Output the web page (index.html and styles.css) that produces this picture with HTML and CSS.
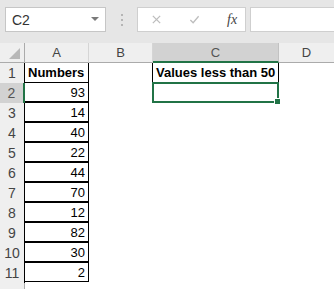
FILE: index.html
```html
<!DOCTYPE html>
<html lang="en">
<head>
  <meta charset="UTF-8">
  <title>Sheet</title>
  <link rel="stylesheet" href="styles.css">
</head>
<body>
  <div class="toolbar">
    <div class="name-box">
      <span class="name-text">C2</span>
      <span class="name-arrow"></span>
    </div>
    <div class="grip"><i></i><i></i><i></i></div>
    <div class="fx-box">
      <svg class="fx-icon" viewBox="0 0 12 12"><path d="M2 2l8 8M10 2l-8 8"/></svg>
      <svg class="fx-icon" viewBox="0 0 12 12"><path d="M1.5 6.5l3 3 6-7"/></svg>
      <span class="fx-label">fx</span>
    </div>
    <div class="formula-input"></div>
  </div>

  <div class="sheet">
    <div class="corner"><span class="corner-tri"></span></div>
    <div class="col-head">A</div>
    <div class="col-head">B</div>
    <div class="col-head active">C</div>
    <div class="col-head last">D</div>

    <div class="row-head">1</div>
    <div class="cell boxed top bold">Numbers</div>
    <div class="cell"></div>
    <div class="cell boxed-c bold">Values less than 50</div>
    <div class="cell"></div>

    <div class="row-head active">2</div>
    <div class="cell boxed num">93</div>
    <div class="cell"></div>
    <div class="cell selected"><span class="fill-handle"></span></div>
    <div class="cell"></div>

    <div class="row-head">3</div>
    <div class="cell boxed num">14</div>
    <div class="cell"></div><div class="cell"></div><div class="cell"></div>

    <div class="row-head">4</div>
    <div class="cell boxed num">40</div>
    <div class="cell"></div><div class="cell"></div><div class="cell"></div>

    <div class="row-head">5</div>
    <div class="cell boxed num">22</div>
    <div class="cell"></div><div class="cell"></div><div class="cell"></div>

    <div class="row-head">6</div>
    <div class="cell boxed num">44</div>
    <div class="cell"></div><div class="cell"></div><div class="cell"></div>

    <div class="row-head">7</div>
    <div class="cell boxed num">70</div>
    <div class="cell"></div><div class="cell"></div><div class="cell"></div>

    <div class="row-head">8</div>
    <div class="cell boxed num">12</div>
    <div class="cell"></div><div class="cell"></div><div class="cell"></div>

    <div class="row-head">9</div>
    <div class="cell boxed num">82</div>
    <div class="cell"></div><div class="cell"></div><div class="cell"></div>

    <div class="row-head">10</div>
    <div class="cell boxed num">30</div>
    <div class="cell"></div><div class="cell"></div><div class="cell"></div>

    <div class="row-head">11</div>
    <div class="cell boxed num">2</div>
    <div class="cell"></div><div class="cell"></div><div class="cell"></div>

    <div class="row-head empty"></div>
    <div class="cell"></div><div class="cell"></div><div class="cell"></div><div class="cell"></div>
  </div>
</body>
</html>
```

FILE: styles.css
```css
:root {
  --chrome: #e6e6e6;
  --head-bg: #efefef;
  --head-line: #ababab;
  --head-sep: #d5d5d5;
  --green: #217346;
  --text: #000;
  --head-text: #444;
}
body {
  margin: 0;
  width: 334px;
  height: 289px;
  overflow: hidden;
  background: #fff;
  font-family: 'Liberation Sans', Arial, sans-serif;
}
/* formula bar */
.toolbar {
  height: 43px;
  background: var(--chrome);
  display: flex;
  align-items: flex-start;
  padding: 7px 0 0 5px;
  box-sizing: border-box;
}
.name-box {
  width: 101px;
  height: 25px;
  box-sizing: border-box;
  background: #fff;
  border: 1px solid #c6c6c6;
  display: flex;
  align-items: center;
  justify-content: space-between;
  padding: 0 6px 0 6px;
}
.name-text {
  font-size: 14px;
  color: #333;
}
.name-arrow {
  width: 0;
  height: 0;
  border-left: 4px solid transparent;
  border-right: 4px solid transparent;
  border-top: 4px solid #7a7a7a;
  margin-top: -2px;
}
.grip {
  width: 31px;
  height: 25px;
  display: flex;
  flex-direction: column;
  align-items: center;
  justify-content: center;
  gap: 3px;
}
.grip i {
  width: 2px;
  height: 2px;
  background: #b5b5b5;
}
.fx-box {
  width: 109px;
  height: 25px;
  box-sizing: border-box;
  background: #fff;
  border: 1px solid #cfcfcf;
  display: flex;
  align-items: center;
  padding: 0 0 0 13px;
  gap: 27px;
}
.fx-icon {
  width: 11px;
  height: 11px;
  fill: none;
  stroke: #bdbdbd;
  stroke-width: 1.4;
}
.fx-label {
  font-family: 'Liberation Serif', 'Times New Roman', serif;
  font-style: italic;
  font-size: 14px;
  color: #444;
}
.formula-input {
  flex: 1;
  height: 25px;
  box-sizing: border-box;
  background: #fff;
  border: 1px solid #cfcfcf;
  border-right: none;
  margin-left: 4px;
}
/* grid */
.sheet {
  display: grid;
  grid-template-columns: 25px 64px 64px 126px 1fr;
  grid-auto-rows: 20px;
  grid-template-rows: 20px;
}
.corner {
  background: var(--head-bg);
  border-right: 1px solid var(--head-line);
  border-bottom: 1px solid var(--head-line);
  position: relative;
}
.corner-tri {
  position: absolute;
  right: 4px;
  bottom: 3px;
  width: 0;
  height: 0;
  border-left: 11px solid transparent;
  border-bottom: 11px solid #b8b8b8;
}
.col-head {
  background: var(--head-bg);
  border-right: 1px solid var(--head-sep);
  border-bottom: 1px solid var(--head-line);
  font-size: 13px;
  color: var(--head-text);
  text-align: center;
  line-height: 20px;
}
.col-head.active {
  background: #d2d2d2;
  border-bottom: 2px solid var(--green);
  border-right-color: #c2c2c2;
  color: #555;
}
.col-head.last {
  border-right: none;
}
.row-head {
  background: var(--head-bg);
  border-right: 1px solid #000;
  font-size: 14px;
  color: var(--head-text);
  text-align: center;
  line-height: 20px;
}
.row-head.active {
  background: #d2d2d2;
  border-right: 2px solid var(--green);
  color: #555;
}
.row-head.empty {
  border-right: 1px solid var(--head-line);
}
.cell {
  font-size: 13px;
  color: var(--text);
  line-height: 22px;
  padding: 0 3px;
  white-space: nowrap;
  position: relative;
}
.cell.boxed {
  border-right: 1px solid #000;
  border-bottom: 1px solid #000;
  margin-top: -1px;
  border-top: 1px solid #000;
  height: 20px;
  box-sizing: border-box;
  line-height: 20px;
}
.cell.top {
  margin-top: 0;
  border-top: none;
}
.cell.num {
  text-align: right;
}
.bold {
  font-weight: bold;
}
.cell.boxed-c {
  border-left: 1px solid #000;
  border-right: 1px solid #000;
  margin-left: -1px;
  line-height: 20px;
}
.cell.selected {
  border: 2px solid var(--green);
  margin: -1px 0 0 -1px;
  height: 21px;
  box-sizing: border-box;
}
.fill-handle {
  position: absolute;
  right: -4px;
  bottom: -4px;
  width: 5px;
  height: 5px;
  background: var(--green);
  border: 1px solid #fff;
}
```
